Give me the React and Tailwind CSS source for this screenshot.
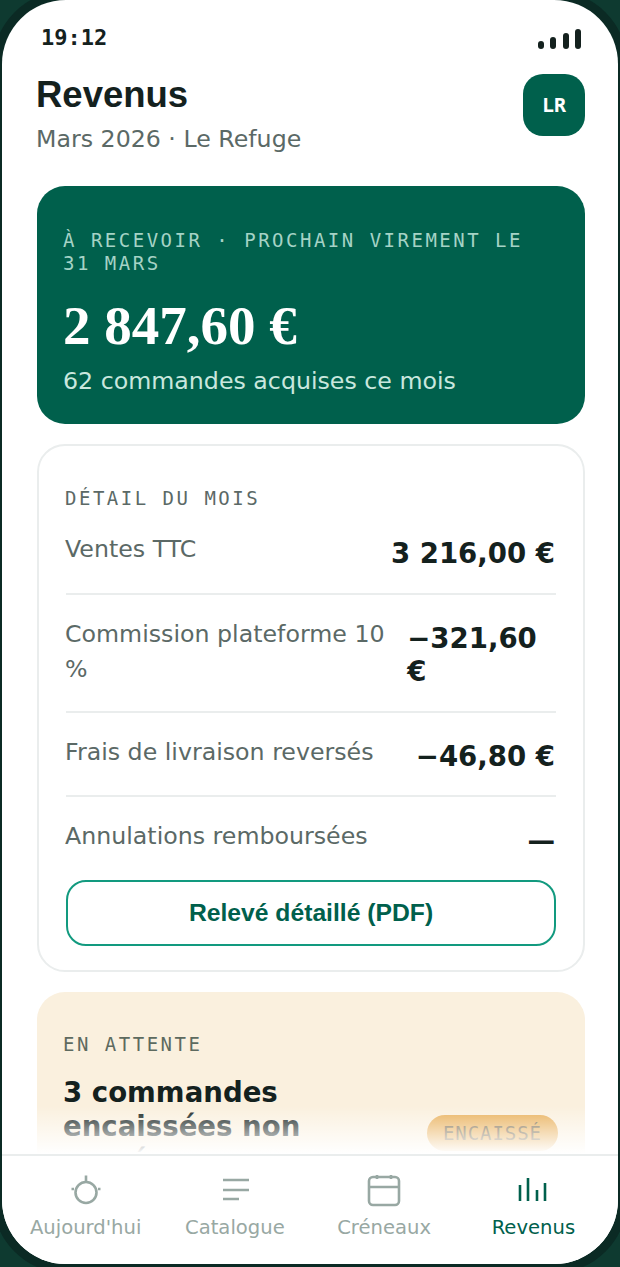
function NavItem({ label, active, children }) {
  return (
    <div className={"flex flex-col items-center gap-[7px] " + (active ? "text-[#00604c]" : "text-[#98a8a3]")}>
      <svg width="40" height="36" viewBox="0 0 40 36" fill="none" stroke="currentColor" strokeWidth="2.6">
        {children}
      </svg>
      <span className="text-[19.6px] leading-[24px] whitespace-nowrap">{label}</span>
    </div>
  );
}

function Row({ label, value, border = true }) {
  return (
    <div className={"flex items-start justify-between gap-4 pt-[22px] " + (border ? "border-b-2 border-[#eaeded] pb-[22px]" : "")}>
      <div className="text-[23.7px] leading-[35px] text-[#5b6966] -ml-[1px]">{label}</div>
      <div className="text-[27.6px] leading-[33.5px] font-bold text-[#14211e] mt-[5px] mr-[1px]">{value}</div>
    </div>
  );
}

export default function App() {
  return (
    <div className="w-[620px] h-[1267px] bg-[#0e3a30] overflow-hidden font-['DejaVu_Sans',sans-serif]">
      <div className="relative mx-[2px] h-[1264px] bg-white rounded-[64px] overflow-hidden flex flex-col shadow-[0_0_0_9px_#0b2a24]">
        <div className="flex items-start justify-between pl-[39px] pr-[37px] pt-[25px] h-[56px]">
          <span className="font-['DejaVu_Sans_Mono',monospace] font-bold text-[22px] leading-[26px] text-[#14211e]">19:12</span>
          <div className="flex items-end gap-[6.5px] h-[20px] mt-[4px]">
            <div className="w-[6px] h-[8px] rounded-full bg-[#14211e]" />
            <div className="w-[6px] h-[12px] rounded-full bg-[#14211e]" />
            <div className="w-[6px] h-[16px] rounded-full bg-[#14211e]" />
            <div className="w-[6px] h-[20px] rounded-full bg-[#14211e]" />
          </div>
        </div>

        <div className="flex items-start justify-between pl-[35px] pr-[33px] mt-[18px]">
          <div>
            <h1 className="font-['Liberation_Sans',sans-serif] font-bold text-[36.5px] leading-[42px] text-[#14211e] -ml-[1px]">Revenus</h1>
            <div className="text-[23.7px] leading-[32px] text-[#5b6966] mt-[7px] -ml-[1px]">Mars 2026 · Le Refuge</div>
          </div>
          <div className="w-[62px] h-[62px] rounded-[20px] bg-[#00604c] text-white font-['DejaVu_Sans_Mono',monospace] font-bold text-[20px] pb-[1px] flex items-center justify-center">LR</div>
        </div>

        <div className="flex-1 min-h-0 overflow-hidden pl-[35px] pr-[33px] mt-[31px] flex flex-col gap-[20px]">
          <div className="shrink-0 bg-[#00604c] rounded-[28px] pl-[26px] pr-[27px] pt-[43px] h-[238px]">
            <div className="font-['DejaVu_Sans_Mono',monospace] text-[19px] leading-[23px] tracking-[2.5px] text-[#a5d3c6]">À RECEVOIR · PROCHAIN VIREMENT LE 31 MARS</div>
            <div className="font-['Liberation_Serif',serif] font-bold text-[55px] leading-[64px] text-white mt-[19px]">2 847,60 €</div>
            <div className="text-[23.7px] leading-[30px] text-[#c9e7de] mt-[8px]">62 commandes acquises ce mois</div>
          </div>

          <div className="shrink-0 border-2 border-[#eaeded] rounded-[28px] px-[27px] pt-[41px] h-[528px]">
            <div className="font-['DejaVu_Sans_Mono',monospace] text-[19px] leading-[23px] tracking-[2.5px] text-[#5b6966] -ml-[1px]">DÉTAIL DU MOIS</div>
            <Row label="Ventes TTC" value="3 216,00 €" />
            <Row label="Commission plateforme 10 %" value="−321,60 €" />
            <Row label="Frais de livraison reversés" value="−46,80 €" />
            <Row label="Annulations remboursées" value="—" border={false} />
            <div className="mt-[22px] h-[66px] border-2 border-[#129a7f] rounded-[20px] flex items-center justify-center font-['Liberation_Sans',sans-serif] font-bold text-[24.7px] text-[#00604c]">Relevé détaillé (PDF)</div>
          </div>

          <div className="shrink-0 bg-[#faf0de] rounded-[28px] pl-[26px] pr-[27px] pt-[41px] h-[300px]">
            <div className="font-['DejaVu_Sans_Mono',monospace] text-[19px] leading-[23px] tracking-[2.5px] text-[#5d6a5f]">EN ATTENTE</div>
            <div className="flex items-center justify-between mt-[20px]">
              <div className="text-[27.6px] leading-[34px] font-bold text-[#14211e] w-[300px]">3 commandes encaissées non versées</div>
              <div className="mt-[12px] px-[16px] h-[36px] rounded-full bg-[#e9b15c] font-['DejaVu_Sans_Mono',monospace] text-[19px] leading-[36px] tracking-[0.95px] text-[#7a6a4c]">ENCAISSÉ</div>
            </div>
          </div>
        </div>

        <div className="absolute left-0 right-0 bottom-[110px] h-[48px] bg-gradient-to-b from-white/0 to-white" />

        <div className="relative shrink-0 h-[110px] bg-white border-t-2 border-[#eaeded] grid grid-cols-4 pt-[17px] pl-[9px] pr-[10px]">
          <NavItem label="Aujourd'hui">
            <circle cx="20" cy="19.5" r="10.5" />
            <path d="M20 2.5V9M5.5 16H8M32 16h2.5" />
          </NavItem>
          <NavItem label="Catalogue">
            <path d="M8 7h26M8 17h26M8 26h16" />
          </NavItem>
          <NavItem label="Créneaux">
            <rect x="5" y="4" width="30" height="28" rx="4" />
            <path d="M5 14h30M13 2v4M27 2v4" />
          </NavItem>
          <NavItem label="Revenus" active>
            <path d="M7 28V12M15 28V5M24 28V17M32 28V10" />
          </NavItem>
        </div>
      </div>
    </div>
  );
}
